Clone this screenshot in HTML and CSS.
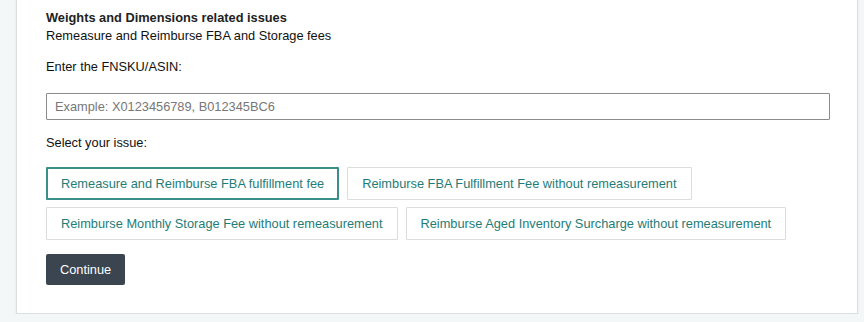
FILE: index.html
```html
<!DOCTYPE html>
<html lang="en">
<head>
    <meta charset="UTF-8">
    <meta name="viewport" content="width=device-width, initial-scale=1.0">
    <title>Weights and Dimensions</title>
    <link rel="stylesheet" href="styles.css">
</head>
<body>
    <div class="card">
        <h3 class="card-title">Weights and Dimensions related issues</h3>
        <p class="card-subtitle">Remeasure and Reimburse FBA and Storage fees</p>

        <label class="field-label" for="fnsku">Enter the FNSKU/ASIN:</label>
        <input class="text-input" id="fnsku" type="text" placeholder="Example: X0123456789, B012345BC6">

        <p class="field-label issue-label">Select your issue:</p>
        <div class="issue-options">
            <button class="issue-option selected">Remeasure and Reimburse FBA fulfillment fee</button>
            <button class="issue-option">Reimburse FBA Fulfillment Fee without remeasurement</button>
            <button class="issue-option">Reimburse Monthly Storage Fee without remeasurement</button>
            <button class="issue-option">Reimburse Aged Inventory Surcharge without remeasurement</button>
        </div>

        <button class="continue-btn">Continue</button>
    </div>
</body>
</html>
```

FILE: styles.css
```css
body {
    margin: 0;
    padding: 0;
    background: #f4f7f8;
    font-family: 'Liberation Sans', Arial, sans-serif;
    font-size: 12.8px;
    color: #111;
}

.card {
    margin: -2px 6px 0 16px;
    padding: 10px 29px 28px;
    background: #fff;
    border: 1px solid #dcdfe0;
    box-shadow: 0 1px 2px rgba(0, 0, 0, 0.08);
}

.card-title {
    margin: 0;
    font-size: 12.8px;
    line-height: 18px;
    font-weight: bold;
    color: #222;
}

.card-subtitle {
    margin: 0;
    line-height: 18px;
}

.field-label {
    display: block;
    margin: 13px 0 0;
    line-height: 18px;
}

.text-input {
    display: block;
    box-sizing: border-box;
    width: 784px;
    height: 27px;
    margin-top: 17px;
    padding: 0 8px;
    border: 1px solid #8c8c8c;
    border-radius: 1px;
    font-family: inherit;
    font-size: 12.8px;
    color: #111;
}

.text-input::placeholder {
    color: #777;
}

.issue-label {
    margin-top: 14px;
}

.issue-options {
    display: flex;
    flex-wrap: wrap;
    gap: 7px 8px;
    margin-top: 15px;
    width: 790px;
}

.issue-option {
    height: 33px;
    padding: 0 14px;
    background: #fff;
    border: 1px solid #dcdcdc;
    border-radius: 1px;
    font-family: inherit;
    font-size: 12.8px;
    color: #1f7c78;
    cursor: pointer;
}

.issue-option.selected {
    border: 2px solid #3a8f8a;
    padding: 0 13px;
}

.continue-btn {
    display: block;
    height: 31px;
    margin-top: 14px;
    padding: 0 14px;
    background: #3a4550;
    border: none;
    border-radius: 2px;
    font-family: inherit;
    font-size: 12.8px;
    color: #fff;
    cursor: pointer;
}
```
